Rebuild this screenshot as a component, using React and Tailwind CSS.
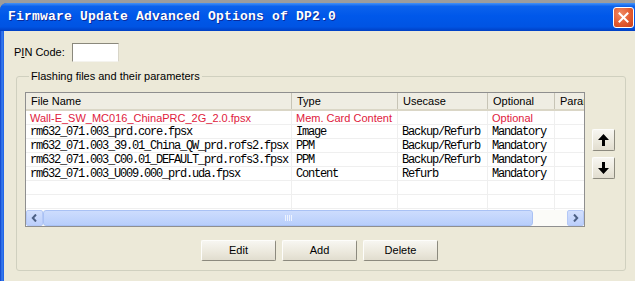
import React from 'react';

const rows = [
  { file: 'Wall-E_SW_MC016_ChinaPRC_2G_2.0.fpsx', type: 'Mem. Card Content', usecase: '', optional: 'Optional', red: true },
  { file: 'rm632_071.003_prd.core.fpsx', type: 'Image', usecase: 'Backup/Refurb', optional: 'Mandatory' },
  { file: 'rm632_071.003_39.01_China_QW_prd.rofs2.fpsx', type: 'PPM', usecase: 'Backup/Refurb', optional: 'Mandatory' },
  { file: 'rm632_071.003_C00.01_DEFAULT_prd.rofs3.fpsx', type: 'PPM', usecase: 'Backup/Refurb', optional: 'Mandatory' },
  { file: 'rm632_071.003_U009.000_prd.uda.fpsx', type: 'Content', usecase: 'Refurb', optional: 'Mandatory' },
  { file: '', type: '', usecase: '', optional: '' },
  { file: '', type: '', usecase: '', optional: '' },
  { file: '', type: '', usecase: '', optional: '' },
];

// widths of the list columns, last one is cut by the list edge
const cols = ['w-[266px]', 'w-[106px]', 'w-[90px]', 'w-[67px]', 'w-[80px]'];
const headers = ['File Name', 'Type', 'Usecase', 'Optional', 'Parameters'];

const sans = "font-['Liberation_Sans',Arial,sans-serif]";
const mono = "font-['Liberation_Mono','Noto_Sans_CJK_SC',monospace]";

const XpButton = ({ children, className = '' }) => (
  <button
    className={`h-[21px] flex items-center justify-center rounded-[2px] border border-t-[#fdfdfb] border-l-[#fdfdfb] border-r-[#8c8a7e] border-b-[#8c8a7e] bg-[linear-gradient(180deg,#f7f6f1,#ebe8dc_60%,#e1ddcf)] text-[11px] text-black ${sans} ${className}`}
  >
    {children}
  </button>
);

const ScrollArrow = ({ dir }) => (
  <div className="w-[17px] h-full flex items-center justify-center rounded-[2px] border border-[#b4c8f6] bg-[linear-gradient(180deg,#d3e0fd,#bccffb)]">
    <svg width="7" height="8" viewBox="0 0 7 8">
      {dir === 'left' ? (
        <path d="M5 0.5 L1.8 4 L5 7.5" fill="none" stroke="#4d6185" strokeWidth="2" />
      ) : (
        <path d="M2 0.5 L5.2 4 L2 7.5" fill="none" stroke="#4d6185" strokeWidth="2" />
      )}
    </svg>
  </div>
);

const App = () => {
  return (
    <div className={`w-[635px] h-[281px] overflow-hidden bg-[#9d9d9d] pt-[3px] ${sans}`}>
      <div className="w-[660px] h-full flex flex-col rounded-tl-[7px] overflow-hidden bg-[#0a4fd9]">
        {/* title bar */}
        <div className="h-[28px] flex items-center pl-[8px] pr-[26px] bg-[linear-gradient(180deg,#4592f6_0%,#0c62ec_12%,#0058ea_45%,#0054e3_85%,#003fc4_100%)]">
          <span className={`flex-1 text-white font-bold text-[13px] tracking-[0.2px] [text-shadow:1px_1px_0_#0b2a9a] ${mono}`}>
            Firmware Update Advanced Options of DP2.0
          </span>
          <div className="w-[21px] h-[21px] flex items-center justify-center rounded-[3px] border border-white bg-[radial-gradient(circle_at_35%_30%,#f08a64,#e25a30_55%,#c8401a)]">
            <svg width="11" height="11" viewBox="0 0 11 11">
              <path d="M1.5 1.5 L9.5 9.5 M9.5 1.5 L1.5 9.5" stroke="white" strokeWidth="2" strokeLinecap="square" />
            </svg>
          </div>
        </div>

        <div className="flex-1 flex">
          <div className="w-[4px] bg-[linear-gradient(90deg,#0a3fc8,#3a7ef0,#1a5ee4)]" />
          <div className="flex-1 bg-[#ece9d8] flex flex-col">
            {/* PIN code */}
            <div className="flex items-center pl-[10px] pt-[12px]">
              <span className="w-[58px] text-[11px] text-black">
                P<span className="underline">I</span>N Code:
              </span>
              <div className="w-[47px] h-[19px] bg-white border border-t-[#8a887c] border-l-[#8a887c] border-r-[#d8d5c8] border-b-[#f4f3ee]" />
            </div>

            {/* group box */}
            <fieldset className="ml-[12px] mt-[8px] w-[610px] h-[201px] rounded-[3px] border border-[#d0d0bf] px-[8px] pt-[9px]">
              <legend className="ml-[4px] px-[2px] text-[11px] leading-[13px] text-black">
                Flashing files and their parameters
              </legend>

              <div className="flex">
                {/* list view */}
                <div className="w-[560px] h-[135px] border border-[#8f8f8f] bg-white flex flex-col overflow-hidden">
                  <div className="h-[18px] flex shrink-0 bg-[#efede3] border-b-[2px] border-[#dad6c6]">
                    {headers.map((h, i) => (
                      <div
                        key={h}
                        className={`${cols[i]} shrink-0 h-full flex items-center pl-[5px] text-[11px] text-black border-r border-[#c7c4b6] whitespace-nowrap overflow-hidden`}
                      >
                        {h}
                      </div>
                    ))}
                  </div>

                  <div className="flex-1 overflow-hidden">
                    {rows.map((r, idx) => {
                      const cells = [r.file, r.type, r.usecase, r.optional, ''];
                      return (
                        <div key={idx} className="h-[14px] flex border-b border-[#efefef]">
                          {cells.map((c, i) => (
                            <div
                              key={i}
                              className={`${cols[i]} shrink-0 h-full flex items-center pl-[4px] pt-[1px] whitespace-nowrap overflow-hidden border-r border-[#efefef] ${
                                r.red
                                  ? `text-[11px] text-[#e0203c] ${sans}`
                                  : `text-[12px] tracking-[-1.2px] text-black ${mono}`
                              }`}
                            >
                              {c}
                            </div>
                          ))}
                        </div>
                      );
                    })}
                  </div>

                  {/* horizontal scrollbar */}
                  <div className="h-[16px] shrink-0 flex bg-[#fbfbf8]">
                    <ScrollArrow dir="left" />
                    <div className="w-[490px] h-full flex items-center justify-center gap-[1px] rounded-[3px] border border-[#a9c1f4] bg-[linear-gradient(180deg,#cddcfd,#b8cefb)]">
                      <div className="w-[1px] h-[6px] bg-[#eef3fe]" />
                      <div className="w-[1px] h-[6px] bg-[#eef3fe]" />
                      <div className="w-[1px] h-[6px] bg-[#eef3fe]" />
                      <div className="w-[1px] h-[6px] bg-[#eef3fe]" />
                    </div>
                    <div className="flex-1" />
                    <ScrollArrow dir="right" />
                  </div>
                </div>

                {/* move up / down */}
                <div className="ml-[7px] pt-[37px] flex flex-col gap-[6px]">
                  <XpButton className="w-[23px] h-[22px]">
                    <svg width="11" height="12" viewBox="0 0 11 12">
                      <path d="M5.5 0 L11 6 L7 6 L7 12 L4 12 L4 6 L0 6 Z" fill="black" />
                    </svg>
                  </XpButton>
                  <XpButton className="w-[23px] h-[22px]">
                    <svg width="11" height="12" viewBox="0 0 11 12">
                      <path d="M5.5 12 L11 6 L7 6 L7 0 L4 0 L4 6 L0 6 Z" fill="black" />
                    </svg>
                  </XpButton>
                </div>
              </div>

              <div className="flex gap-[6px] pl-[176px] mt-[13px]">
                <XpButton className="w-[75px]">Edit</XpButton>
                <XpButton className="w-[75px]">Add</XpButton>
                <XpButton className="w-[75px]">Delete</XpButton>
              </div>
            </fieldset>
          </div>
        </div>
      </div>
    </div>
  );
};

export default App;
